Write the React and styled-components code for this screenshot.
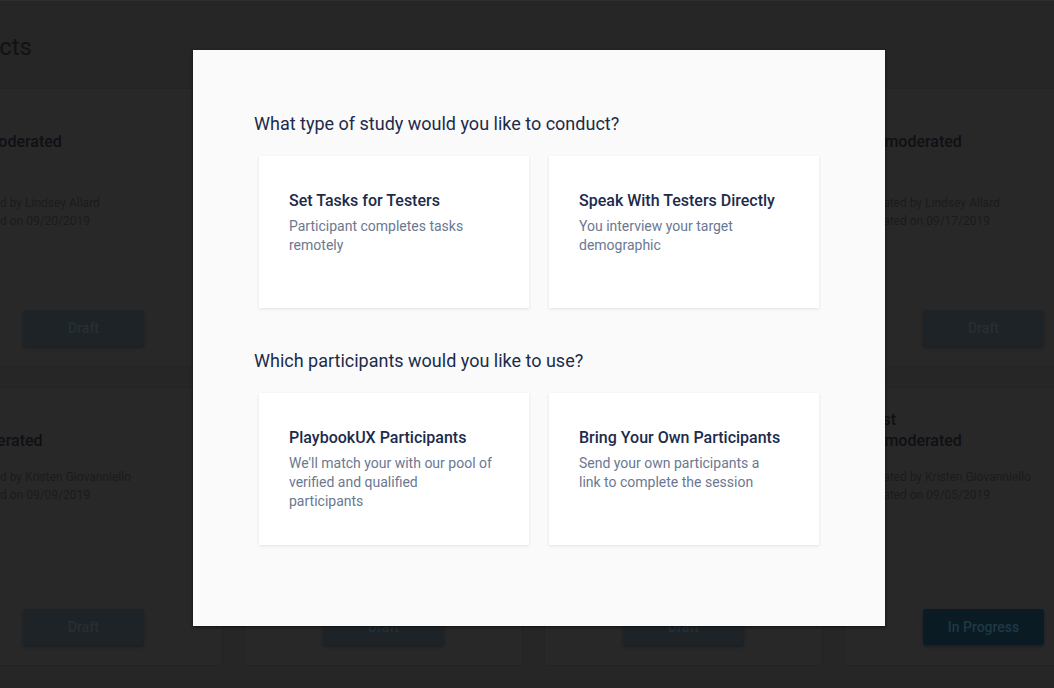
import React from "react";
import styled, { createGlobalStyle } from "styled-components";

const Global = createGlobalStyle`
  html, body { margin: 0; padding: 0; }
  body {
    font-family: Roboto, "Noto Sans", "Liberation Sans", sans-serif;
    background: #262626;
    -webkit-font-smoothing: antialiased;
  }
  * { box-sizing: border-box; }
`;

const Page = styled.div`
  position: relative;
  width: 1054px;
  height: 688px;
  overflow: hidden;
  background: #262626;
  border-top: 1px solid #2d2d2d;
`;

const Content = styled.main`
  margin-left: -56px;
  padding-top: 32px;
  display: flex;
  flex-direction: column;
`;

const PageTitle = styled.h1`
  margin: 0 0 27px 0;
  font-size: 24px;
  line-height: 28px;
  font-weight: 400;
  color: #121214;
`;

const Grid = styled.div`
  display: grid;
  grid-template-columns: repeat(4, 279px);
  grid-auto-rows: 279px;
  column-gap: 21px;
  row-gap: 20px;
`;

const ProjectCard = styled.article`
  display: flex;
  flex-direction: column;
  padding: 21px 20px 20px 20px;
  background: #282828;
  border: 1px solid #232323;
`;

const ProjectTitle = styled.h3`
  margin: 0;
  min-height: 42px;
  display: flex;
  align-items: flex-end;
  font-size: 16px;
  line-height: 21px;
  font-weight: 500;
  color: #0f1014;
  white-space: pre-line;
`;

const Meta = styled.div`
  margin-top: ${(p) => p.$gap}px;
  font-size: 12px;
  line-height: 18px;
  color: #1b1b1c;
`;

const StatusButton = styled.button`
  margin: auto auto 0;
  width: 121px;
  height: 36px;
  border: none;
  border-radius: 3px;
  font-family: inherit;
  font-size: 14px;
  font-weight: 500;
  background: ${(p) => (p.$active ? "#0a1b23" : "#1d2327")};
  color: ${(p) => (p.$active ? "#1e3946" : "#262f34")};
  box-shadow: 0 2px 3px rgba(0, 0, 0, 0.25);
`;

const Modal = styled.section`
  position: absolute;
  left: 193px;
  top: 49px;
  width: 692px;
  height: 576px;
  background: #fafafa;
  box-shadow: 0 1px 3px rgba(0, 0, 0, 0.6);
  padding: 62px 61px 0 61px;
  display: flex;
  flex-direction: column;
`;

const Question = styled.h2`
  margin: ${(p) => p.$top}px 0 20px;
  font-size: 18px;
  line-height: 24px;
  font-weight: 400;
  color: #1c2b4b;
`;

const Options = styled.div`
  display: grid;
  grid-template-columns: 270px 270px;
  column-gap: 20px;
  padding: 0 5px;
`;

const Option = styled.div`
  height: 152px;
  background: #ffffff;
  box-shadow: 0 1px 3px rgba(0, 0, 0, 0.1);
  padding: 35px 35px 0 30px;
  cursor: pointer;
`;

const OptionTitle = styled.div`
  font-size: 16px;
  line-height: 20px;
  font-weight: 500;
  color: #1c2b4b;
`;

const OptionText = styled.div`
  margin-top: 6px;
  font-size: 14px;
  line-height: 19px;
  color: #6b7891;
`;

const projects = [
  { title: "Unmoderated", by: "Lindsey Allard", date: "09/20/2019", gap: 42, status: "Draft" },
  { title: "Unmoderated", by: "Lindsey Allard", date: "09/19/2019", gap: 42, status: "Draft" },
  { title: "Unmoderated", by: "Kristen Giovanniello", date: "09/18/2019", gap: 42, status: "Draft" },
  { title: "Unmoderated", by: "Lindsey Allard", date: "09/17/2019", gap: 42, status: "Draft" },
  { title: "Test\nModerated", by: "Kristen Giovanniello", date: "09/09/2019", gap: 17, status: "Draft" },
  { title: "Test\nUnmoderated", by: "Lindsey Allard", date: "09/08/2019", gap: 17, status: "Draft" },
  { title: "Test\nUnmoderated", by: "Lindsey Allard", date: "09/06/2019", gap: 17, status: "Draft" },
  { title: "Test\nUnmoderated", by: "Kristen Giovanniello", date: "09/05/2019", gap: 17, status: "In Progress" },
];

const sections = [
  {
    q: "What type of study would you like to conduct?",
    top: 0,
    options: [
      { t: "Set Tasks for Testers", d: "Participant completes tasks remotely" },
      { t: "Speak With Testers Directly", d: "You interview your target demographic" },
    ],
  },
  {
    q: "Which participants would you like to use?",
    top: 41,
    options: [
      { t: "PlaybookUX Participants", d: "We'll match your with our pool of verified and qualified participants" },
      { t: "Bring Your Own Participants", d: "Send your own participants a link to complete the session" },
    ],
  },
];

export default function App() {
  return (
    <>
      <Global />
      <Page>
        <Content>
          <PageTitle>Projects</PageTitle>
          <Grid>
            {projects.map((p, i) => (
              <ProjectCard key={i}>
                <ProjectTitle>{p.title}</ProjectTitle>
                <Meta $gap={p.gap}>
                  Created by {p.by}
                  <br />
                  Created on {p.date}
                </Meta>
                <StatusButton $active={p.status !== "Draft"}>{p.status}</StatusButton>
              </ProjectCard>
            ))}
          </Grid>
        </Content>
        <Modal>
          {sections.map((s, i) => (
            <React.Fragment key={i}>
              <Question $top={s.top}>{s.q}</Question>
              <Options>
                {s.options.map((o, j) => (
                  <Option key={j}>
                    <OptionTitle>{o.t}</OptionTitle>
                    <OptionText>{o.d}</OptionText>
                  </Option>
                ))}
              </Options>
            </React.Fragment>
          ))}
        </Modal>
      </Page>
    </>
  );
}
